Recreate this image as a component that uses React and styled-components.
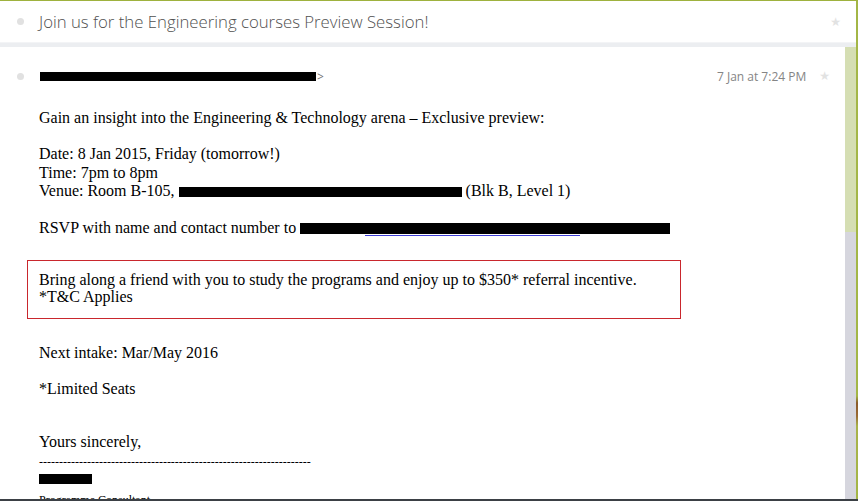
import React from "react";
import styled, { createGlobalStyle } from "styled-components";

const Global = createGlobalStyle`
  html, body { margin: 0; padding: 0; background: #ffffff; overflow: hidden; }
  * { box-sizing: border-box; }
`;

const Frame = styled.div`
  width: 858px;
  height: 501px;
  display: flex;
  border-top: 1px solid #9eb23e;
  border-bottom: 2px solid #3b4045;
  overflow: hidden;
`;

const Main = styled.div`
  flex: 1;
  display: flex;
  flex-direction: column;
  min-width: 0;
`;

const Edge = styled.div`
  width: 2px;
  background: linear-gradient(
    to bottom,
    #a3b646 0px,
    #a3b646 395px,
    #8a5a2a 402px,
    #9a6a35 415px,
    #a8b24a 425px,
    #a3b646 100%
  );
`;

const Header = styled.div`
  height: 41px;
  display: flex;
  align-items: center;
  padding: 0 15px 0 17px;
  background: #ffffff;
`;

const Dot = styled.span`
  width: 7px;
  height: 7px;
  border-radius: 50%;
  background: #e1e1e1;
  flex: none;
`;

const Subject = styled.div`
  margin-left: 15px;
  flex: 1;
  font-family: "Open Sans", "Noto Sans", sans-serif;
  font-weight: 300;
  font-size: 16.75px;
  color: #505050;
  white-space: nowrap;
  padding-bottom: 1px;
`;

const Star = styled.span`
  font-family: "DejaVu Sans", sans-serif;
  font-size: ${(p) => p.$size || 12}px;
  color: #e2e2e2;
  line-height: 1;
`;

const Separator = styled.div`
  height: 5px;
  background: #eceef1;
  border-top: 1px solid #f3f4f6;
`;

const Content = styled.div`
  flex: 1;
  display: flex;
  min-height: 0;
`;

const Pane = styled.div`
  flex: 1;
  background: #ffffff;
  overflow: hidden;
`;

const Scrollbar = styled.div`
  width: 11px;
  display: flex;
  flex-direction: column;
  background: #d6d6de;
`;

const Thumb = styled.div`
  height: 185px;
  background: #d5deb3;
`;

const MessageHead = styled.div`
  display: flex;
  align-items: center;
  height: 14px;
  margin-top: 22px;
  padding: 0 15px 0 17px;
  font-family: "Open Sans", "Noto Sans", sans-serif;
  font-size: 12px;
  color: #7a7a7a;
`;

const Sender = styled.div`
  flex: 1;
  margin-left: 16px;
  display: flex;
  align-items: center;
`;

const Redact = styled.span`
  display: inline-block;
  width: ${(p) => p.$w}px;
  height: ${(p) => p.$h || 10}px;
  background: #000;
  vertical-align: ${(p) => p.$va || "-1px"};
  position: relative;
`;

const LinkLine = styled.span`
  position: absolute;
  left: ${(p) => p.$l}px;
  width: ${(p) => p.$w}px;
  bottom: -2px;
  height: 1px;
  background: #3d3dd6;
`;

const Gt = styled.span`
  margin-left: 1px;
  color: #777;
`;

const Date = styled.span`
  margin-right: 13px;
  color: #858585;
  white-space: nowrap;
`;

const Body = styled.div`
  margin-top: 26px;
  padding-left: 39px;
  font-family: "Liberation Serif", "Times New Roman", serif;
  font-size: 16px;
  color: #000;
`;

const P = styled.p`
  margin: 0 0 ${(p) => p.$mb ?? 18}px 0;
  line-height: 18.4px;
  white-space: nowrap;
`;

const Box = styled.div`
  margin: 23px 0 25px -12px;
  width: 654px;
  border: 1px solid #c9272d;
  padding: 10px 11px 13px;
  font-size: 16px;
  line-height: 17px;
  white-space: nowrap;
`;

const Signature = styled.div`
  font-size: 12px;
  line-height: 14px;
`;

const Dashes = styled.div`
  white-space: nowrap;
  margin-top: 4px;
`;

const SigName = styled.div`
  margin-top: 5px;
  height: 10px;
  width: 53px;
  background: #000;
`;

const Role = styled.div`
  margin-top: 9px;
`;

export default function App() {
  return (
    <>
      <Global />
      <Frame>
        <Main>
          <Header>
            <Dot />
            <Subject>Join us for the Engineering courses Preview Session!</Subject>
            <Star>★</Star>
          </Header>
          <Separator />
          <Content>
            <Pane>
              <MessageHead>
                <Dot />
                <Sender>
                  <Redact $w={276} $h={9} />
                  <Gt>&gt;</Gt>
                </Sender>
                <Date>7 Jan at 7:24 PM</Date>
                <Star>★</Star>
              </MessageHead>
              <Body>
                <P>
                  Gain an insight into the Engineering &amp; Technology arena – Exclusive preview:
                </P>
                <P $mb={0}>Date: 8 Jan 2015, Friday (tomorrow!)</P>
                <P $mb={0}>Time: 7pm to 8pm</P>
                <P>
                  Venue: Room B-105, <Redact $w={283} $h={10} /> (Blk B, Level 1)
                </P>
                <P $mb={0}>
                  RSVP with name and contact number to{" "}
                  <Redact $w={370} $h={11}>
                    <LinkLine $l={65} $w={215} />
                  </Redact>
                </P>
                <Box>
                  Bring along a friend with you to study the programs and enjoy up to $350* referral incentive.
                  <br />
                  *T&amp;C Applies
                </Box>
                <P>Next intake: Mar/May 2016</P>
                <P $mb={34}>*Limited Seats</P>
                <P $mb={0}>Yours sincerely,</P>
                <Signature>
                  <Dashes>{"-".repeat(68)}</Dashes>
                  <SigName />
                  <Role>Programme Consultant</Role>
                </Signature>
              </Body>
            </Pane>
            <Scrollbar>
              <Thumb />
            </Scrollbar>
          </Content>
        </Main>
        <Edge />
      </Frame>
    </>
  );
}
